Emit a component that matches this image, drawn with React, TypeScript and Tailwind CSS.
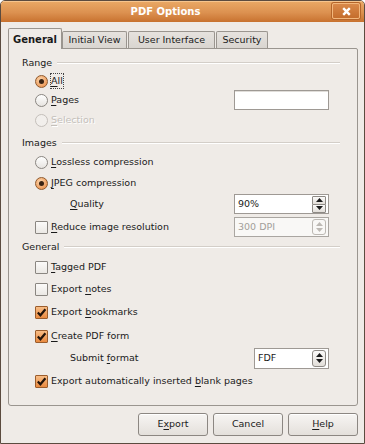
import React from 'react'
import { clsx } from 'clsx'

type Kids = { children?: React.ReactNode }

function U({ children }: Kids) {
  return <span className="underline decoration-1 underline-offset-[2px]">{children}</span>
}

function Radio({ checked = false, disabled = false }: { checked?: boolean; disabled?: boolean }) {
  return (
    <span
      className={clsx(
        'flex h-[13px] w-[13px] shrink-0 items-center justify-center rounded-full border',
        checked && 'border-[#8f5a2e] bg-[radial-gradient(circle_at_40%_35%,#fcd6ad,#e8853c)]',
        !checked && !disabled && 'border-[#8a8681] bg-[linear-gradient(#ffffff,#e7e4e0)]',
        disabled && 'border-[#c4bfba] bg-[#f2efec]'
      )}
    >
      {checked && <span className="h-[5px] w-[5px] rounded-full bg-[#3a2313]" />}
    </span>
  )
}

function Check({ checked = false }: { checked?: boolean }) {
  return (
    <span
      className={clsx(
        'flex h-[13px] w-[13px] shrink-0 items-center justify-center rounded-[1px] border',
        checked
          ? 'border-[#9b5d2c] bg-[linear-gradient(#f8bd86,#e98a40)]'
          : 'border-[#8a8681] bg-[linear-gradient(#fbfaf9,#ebe8e4)]'
      )}
    >
      {checked && (
        <svg width="11" height="11" viewBox="0 0 11 11">
          <path d="M1.8 5.6 L4.4 8.3 L9.4 2.2" fill="none" stroke="#23140a" strokeWidth="2.2" />
        </svg>
      )}
    </span>
  )
}

function Arrow({ up, color }: { up: boolean; color: string }) {
  return (
    <svg width="7" height="4" viewBox="0 0 7 4">
      <polygon points={up ? '0,4 3.5,0 7,4' : '0,0 7,0 3.5,4'} fill={color} />
    </svg>
  )
}

function GroupLabel({ children, className }: Kids & { className?: string }) {
  return (
    <div className={clsx('flex h-[18px] items-center gap-[5px]', className)}>
      <span>{children}</span>
      <span className="h-[2px] flex-1 border-t border-b border-t-[#d3cec8] border-b-white" />
    </div>
  )
}

function Row({ children, className }: Kids & { className?: string }) {
  return <div className={clsx('flex h-[18px] items-center pl-[13px]', className)}>{children}</div>
}

function Tab({ label, active, className }: { label: string; active?: boolean; className?: string }) {
  return (
    <div
      className={clsx(
        'flex items-center justify-center rounded-t-[2px] border border-b-0 border-[#9a958f]',
        active
          ? 'h-[21px] bg-[#efebe7] font-bold text-[10px]'
          : 'mb-px h-[17px] bg-[linear-gradient(#e6e2de,#d9d5d0)]',
        className
      )}
    >
      {label}
    </div>
  )
}

function Button({ children }: Kids) {
  return (
    <button className="flex h-[23px] w-[70px] items-center justify-center rounded-[3px] border border-[#8c8782] bg-[linear-gradient(#f7f5f3,#e4e0db)] shadow-[inset_0_1px_0_#ffffff]">
      {children}
    </button>
  )
}

export default function App() {
  return (
    <div className="h-[444px] w-[365px] bg-white font-['DejaVu_Sans',sans-serif] text-[9.5px] text-[#1a1a1a]">
      <div className="flex h-[444px] flex-col overflow-hidden rounded-t-[5px] border border-[#5b4b3f] bg-[#efebe7]">
        {/* Title bar */}
        <div className="relative flex h-[21px] items-center justify-center bg-[linear-gradient(#eaa966,#dc9150_55%,#c8722f)] pr-[34px] shadow-[inset_0_1px_0_#f6c58e]">
          <span className="text-[10px] font-bold text-white">PDF Options</span>
          <div className="absolute right-[4px] top-[2px] flex h-[16px] w-[28px] items-center justify-center rounded-[2px] border border-[#f2b77c] bg-[linear-gradient(#d9894a,#c46d2c)] shadow-[0_0_0_1px_#b5652a]">
            <svg width="9" height="9" viewBox="0 0 9 9">
              <path d="M1.2 1.2 L7.8 7.8 M7.8 1.2 L1.2 7.8" stroke="#ffffff" strokeWidth="2.4" />
            </svg>
          </div>
        </div>

        <div className="flex flex-1 flex-col pl-[7px] pt-[6px]">
          {/* Tabs */}
          <div className="relative z-10 -mb-px flex h-[21px] items-end">
            <Tab label="General" active className="w-[54px]" />
            <Tab label="Initial View" className="w-[65px]" />
            <Tab label="User Interface" className="ml-px w-[87px]" />
            <Tab label="Security" className="ml-px w-[52px]" />
          </div>

          {/* Panel */}
          <div className="flex h-[358px] w-[350px] flex-col rounded-b-[3px] rounded-tr-[2px] border border-[#9a958f] pl-[13px] pr-[17px] pt-[5px]">
            <GroupLabel>Range</GroupLabel>
            <Row>
              <Radio checked />
              <span className="ml-[3px] outline outline-1 outline-dotted outline-[#444]">
                <U>A</U>ll
              </span>
            </Row>
            <Row className="mt-[1px]">
              <Radio />
              <span className="ml-[3px]">
                <U>P</U>ages
              </span>
              <div className="ml-auto mr-[11px] h-[20px] w-[95px] border border-[#9e9994] bg-white shadow-[inset_0_1px_0_#e0ddd9]" />
            </Row>
            <Row className="mt-[2px]">
              <Radio disabled />
              <span className="ml-[3px] text-[#c4c0bb] [text-shadow:1px_1px_0_#ffffff]">
                <U>S</U>election
              </span>
            </Row>

            <GroupLabel className="mt-[5px]">Images</GroupLabel>
            <Row className="mt-[1px]">
              <Radio />
              <span className="ml-[3px]">
                <U>L</U>ossless compression
              </span>
            </Row>
            <Row className="mt-[3px]">
              <Radio checked />
              <span className="ml-[3px]">
                <U>J</U>PEG compression
              </span>
            </Row>
            <Row className="mt-[3px]">
              <span className="ml-[35px]">
                <U>Q</U>uality
              </span>
              <div className="ml-auto mr-[11px] flex h-[20px] w-[95px] items-center border border-[#9e9994] bg-white pl-[3px] pr-[2px]">
                <span className="flex-1">90%</span>
                <div className="flex flex-col">
                  <span className="flex h-[9px] w-[14px] items-center justify-center rounded-[1px] border border-[#8e8a85] bg-[linear-gradient(#fbfaf9,#e2ded9)]">
                    <Arrow up color="#1a1a1a" />
                  </span>
                  <span className="-mt-px flex h-[9px] w-[14px] items-center justify-center rounded-[1px] border border-[#8e8a85] bg-[linear-gradient(#fbfaf9,#e2ded9)]">
                    <Arrow up={false} color="#1a1a1a" />
                  </span>
                </div>
              </div>
            </Row>
            <Row className="mt-[5px]">
              <Check />
              <span className="ml-[3px]">
                <U>R</U>educe image resolution
              </span>
              <div className="ml-auto mr-[11px] flex h-[20px] w-[95px] items-center border border-[#aaa6a1] bg-[#f9f8f6] pl-[3px] pr-[2px] text-[#a29e99]">
                <span className="flex-1">300 DPI</span>
                <span className="flex h-[16px] w-[14px] flex-col items-center justify-center gap-[2px] rounded-[3px] border border-[#bcb8b3]">
                  <Arrow up color="#bdb9b4" />
                  <Arrow up={false} color="#bdb9b4" />
                </span>
              </div>
            </Row>

            <GroupLabel className="mt-[2px]">General</GroupLabel>
            <Row className="mt-[2px]">
              <Check />
              <span className="ml-[3px]">
                <U>T</U>agged PDF
              </span>
            </Row>
            <Row className="mt-[4px]">
              <Check />
              <span className="ml-[3px]">
                Export <U>n</U>otes
              </span>
            </Row>
            <Row className="mt-[5px]">
              <Check checked />
              <span className="ml-[3px]">
                Export <U>b</U>ookmarks
              </span>
            </Row>
            <Row className="mt-[6px]">
              <Check checked />
              <span className="ml-[3px]">
                <U>C</U>reate PDF form
              </span>
            </Row>
            <Row className="mt-[4px]">
              <span className="ml-[35px]">
                Submit <U>f</U>ormat
              </span>
              <div className="ml-auto mr-[11px] flex h-[21px] w-[75px] items-center border border-[#9e9994] bg-white pl-[3px] pr-[2px]">
                <span className="flex-1">FDF</span>
                <span className="flex h-[17px] w-[14px] flex-col items-center justify-center gap-[2px] rounded-[3px] border border-[#8e8a85] bg-[linear-gradient(#fbfaf9,#e2ded9)]">
                  <Arrow up color="#1a1a1a" />
                  <Arrow up={false} color="#1a1a1a" />
                </span>
              </div>
            </Row>
            <Row className="mt-[5px]">
              <Check checked />
              <span className="ml-[3px]">
                Export automatically inserted <U>b</U>lank pages
              </span>
            </Row>
          </div>

          {/* Buttons */}
          <div className="mt-[7px] flex w-[350px] justify-end gap-[5px]">
            <Button>
              E<U>x</U>port
            </Button>
            <Button>Cancel</Button>
            <Button>
              <U>H</U>elp
            </Button>
          </div>
        </div>
      </div>
    </div>
  )
}
